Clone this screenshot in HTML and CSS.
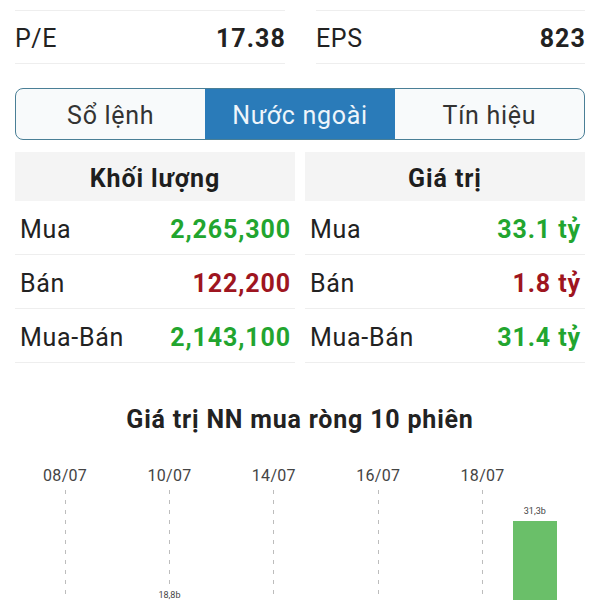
FILE: index.html
```html
<!DOCTYPE html>
<html lang="vi">
<head>
<meta charset="utf-8">
<title>Nước ngoài</title>
<link rel="stylesheet" href="styles.css">
</head>
<body>
<div class="page">
  <div class="stats">
    <div class="stat"><span class="stat-label">P/E</span><span class="stat-value">17.38</span></div>
    <div class="stat"><span class="stat-label">EPS</span><span class="stat-value">823</span></div>
  </div>

  <div class="tabs">
    <div class="tab">Sổ lệnh</div>
    <div class="tab active">Nước ngoài</div>
    <div class="tab">Tín hiệu</div>
  </div>

  <div class="tables">
    <div class="table">
      <div class="thead">Khối lượng</div>
      <div class="row"><span class="label">Mua</span><span class="val up">2,265,300</span></div>
      <div class="row"><span class="label">Bán</span><span class="val down">122,200</span></div>
      <div class="row"><span class="label">Mua-Bán</span><span class="val up">2,143,100</span></div>
    </div>
    <div class="table">
      <div class="thead">Giá trị</div>
      <div class="row"><span class="label">Mua</span><span class="val up">33.1 tỷ</span></div>
      <div class="row"><span class="label">Bán</span><span class="val down">1.8 tỷ</span></div>
      <div class="row"><span class="label">Mua-Bán</span><span class="val up">31.4 tỷ</span></div>
    </div>
  </div>

  <h2 class="chart-title">Giá trị NN mua ròng 10 phiên</h2>

  <div class="chart">
    <div class="col grid"><div class="date">08/07</div><div class="plot"></div></div>
    <div class="col"><div class="date"></div><div class="plot"></div></div>
    <div class="col grid"><div class="date">10/07</div><div class="plot"><span class="bar-val">18,8b</span><div class="bar" style="height:125px"></div></div></div>
    <div class="col"><div class="date"></div><div class="plot"></div></div>
    <div class="col grid"><div class="date">14/07</div><div class="plot"></div></div>
    <div class="col"><div class="date"></div><div class="plot"></div></div>
    <div class="col grid"><div class="date">16/07</div><div class="plot"></div></div>
    <div class="col"><div class="date"></div><div class="plot"></div></div>
    <div class="col grid"><div class="date">18/07</div><div class="plot"></div></div>
    <div class="col"><div class="date"></div><div class="plot"><span class="bar-val">31,3b</span><div class="bar" style="height:209px"></div></div></div>
  </div>
</div>
</body>
</html>
```

FILE: styles.css
```css
html, body {
  margin: 0;
  padding: 0;
  background: #ffffff;
}

body {
  font-family: Roboto, "Noto Sans", "Liberation Sans", sans-serif;
  color: #222222;
}

.page {
  height: 600px;
  overflow: hidden;
  padding: 10px 15px 0;
  box-sizing: border-box;
}

/* top stats */
.stats {
  display: grid;
  grid-template-columns: 270px 269px;
  column-gap: 31px;
}

.stat {
  display: flex;
  justify-content: space-between;
  align-items: center;
  height: 54px;
  box-sizing: border-box;
  border-top: 1px solid #eeeeee;
  border-bottom: 1px solid #eeeeee;
  font-size: 25px;
  padding-top: 2px;
}

.stat-label {
  color: #222222;
  letter-spacing: 0.6px;
}

.stat-value {
  font-weight: 700;
  color: #222222;
  letter-spacing: 1.1px;
  margin-right: -1px;
}

/* tabs */
.tabs {
  margin-top: 24px;
  display: grid;
  grid-template-columns: 1fr 1fr 1fr;
  height: 52px;
  box-sizing: border-box;
  border: 1.5px solid #4a7f96;
  border-radius: 8px;
  overflow: hidden;
  background: #f8fafb;
}

.tab {
  display: flex;
  align-items: center;
  justify-content: center;
  font-size: 25px;
  letter-spacing: 0.7px;
  color: #333333;
  padding-top: 3px;
}

.tab.active {
  background: #2a7bb9;
  color: #eef5fb;
}

/* tables */
.tables {
  margin-top: 12px;
  display: grid;
  grid-template-columns: 1fr 1fr;
  column-gap: 10px;
}

.thead {
  height: 49px;
  background: #f4f4f4;
  display: flex;
  align-items: center;
  justify-content: center;
  font-size: 25px;
  font-weight: 700;
  letter-spacing: 0.9px;
  color: #1e1e1e;
  padding-top: 3px;
  box-sizing: border-box;
}

.row {
  height: 54px;
  box-sizing: border-box;
  border-bottom: 1px solid #eeeeee;
  display: flex;
  align-items: center;
  justify-content: space-between;
  padding: 3px 5px 0;
  font-size: 25px;
}

.label {
  color: #222222;
  letter-spacing: 0.7px;
}

.val {
  font-weight: 700;
  letter-spacing: 0.9px;
  margin-right: -1px;
}

.up {
  color: #22a52f;
}

.down {
  color: #9e1520;
}

/* chart */
.chart-title {
  margin: 41px 0 0;
  text-align: center;
  font-size: 25px;
  line-height: 32px;
  font-weight: 700;
  letter-spacing: 0.8px;
  color: #222222;
}

.chart {
  margin: 30px 0 0 24px;
  display: grid;
  grid-template-columns: repeat(10, 52.2px);
}

.col {
  display: flex;
  flex-direction: column;
  align-items: center;
}

.date {
  height: 20px;
  line-height: 20px;
  font-size: 16px;
  letter-spacing: 0.3px;
  color: #444444;
  white-space: nowrap;
}

.plot {
  margin-top: 4px;
  height: 240px;
  width: 100%;
  display: flex;
  flex-direction: column;
  justify-content: flex-end;
  align-items: center;
}

.col.grid .plot {
  background-image: repeating-linear-gradient(to bottom, #bdbdbd 0 4px, transparent 4px 10px);
  background-size: 1px 100%;
  background-position: center top;
  background-repeat: no-repeat;
}

.bar-val {
  font-size: 9px;
  line-height: 12px;
  color: #444444;
  margin-bottom: 4px;
  background: #ffffff;
}

.bar {
  width: 44px;
  background: #6abf69;
}
```
